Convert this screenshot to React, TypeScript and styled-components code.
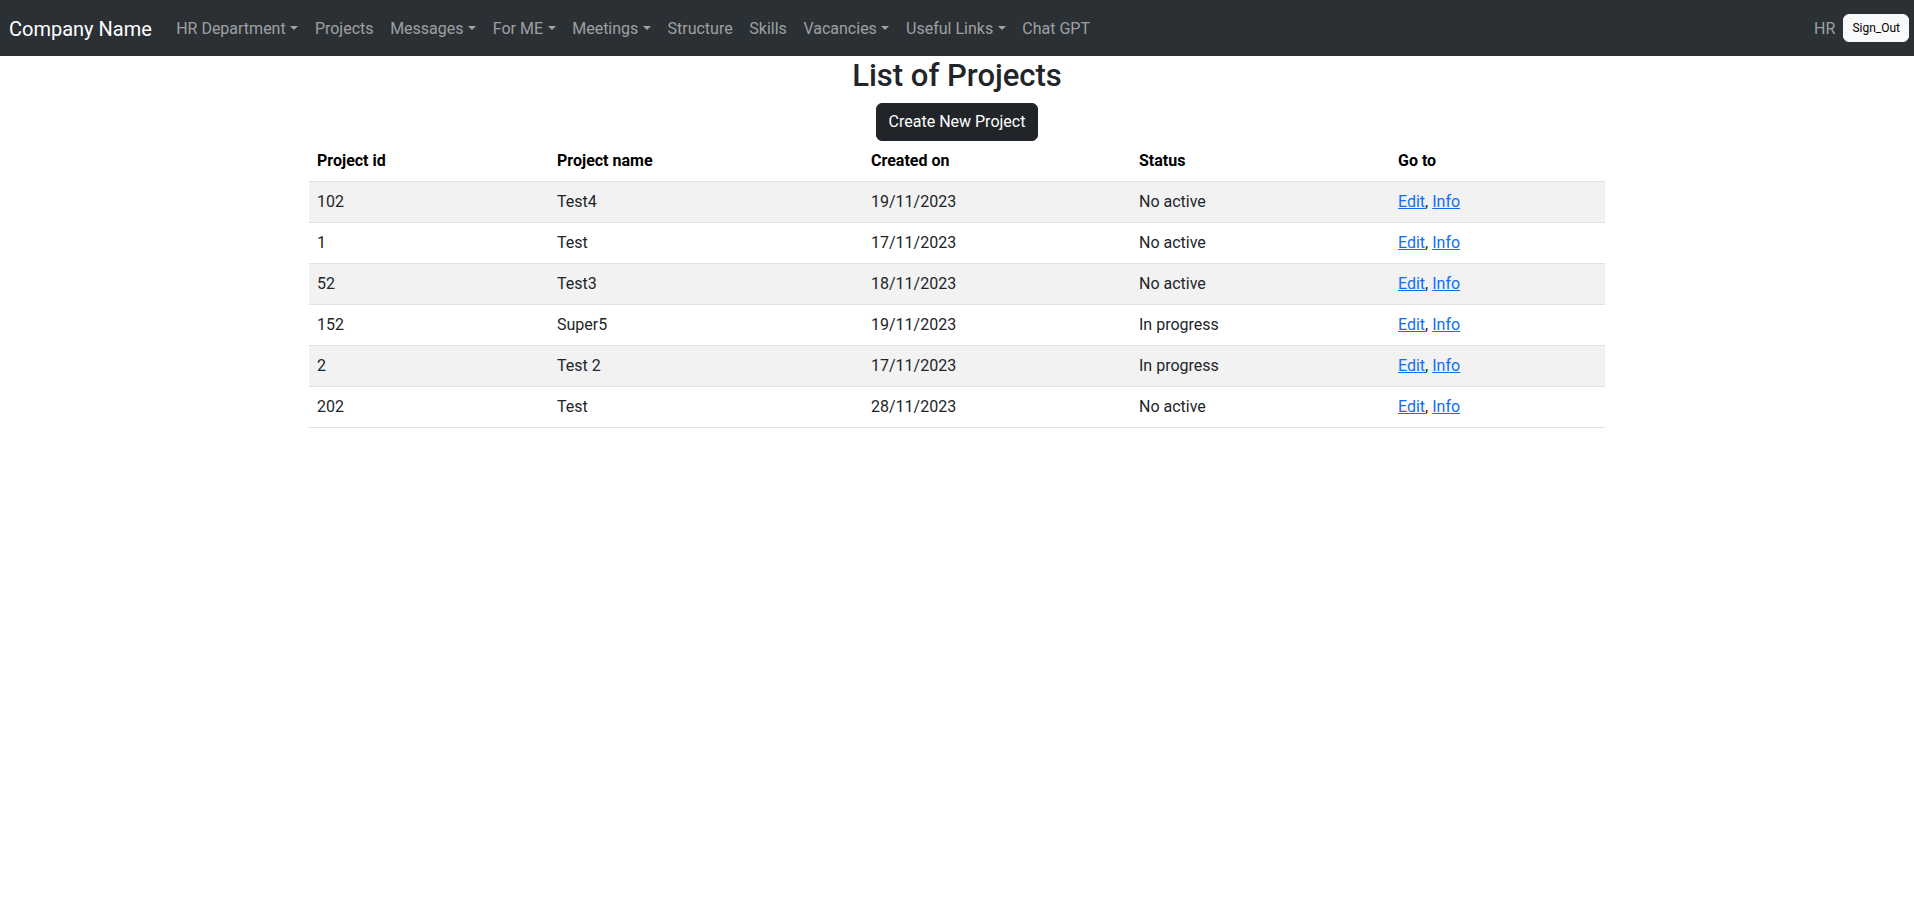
import React from "react";
import styled, { createGlobalStyle } from "styled-components";

const GlobalStyle = createGlobalStyle`
  *, *::before, *::after { box-sizing: border-box; }
  body {
    margin: 0;
    font-family: Roboto, "Liberation Sans", Arial, sans-serif;
    font-size: 16px;
    line-height: 1.5;
    color: #212529;
    background: #fff;
  }
`;

const Navbar = styled.nav`
  display: flex;
  align-items: center;
  justify-content: space-between;
  height: 56px;
  padding: 8px 5px 8px 9px;
  background: #2b3035;
`;

const NavLeft = styled.div`
  display: flex;
  align-items: center;
`;

const Brand = styled.a`
  font-size: 20px;
  line-height: 30px;
  padding: 6px 0 4px;
  margin-right: 16px;
  color: #fff;
  text-decoration: none;
  white-space: nowrap;
`;

const NavList = styled.ul`
  display: flex;
  list-style: none;
  margin: 0;
  padding: 0;
`;

const NavLink = styled.a<{ $dropdown?: boolean }>`
  display: block;
  padding: 9px 8.3px 7px;
  color: rgba(255, 255, 255, 0.55);
  text-decoration: none;
  white-space: nowrap;
  &::after {
    content: ${(p) => (p.$dropdown ? '""' : "none")};
    display: inline-block;
    margin-left: 4.6px;
    vertical-align: 0.255em;
    border-top: 0.3em solid;
    border-right: 0.3em solid transparent;
    border-left: 0.3em solid transparent;
    border-bottom: 0;
  }
`;

const NavRight = styled.div`
  display: flex;
  align-items: center;
`;

const UserLabel = styled.span`
  padding: 9px 8px 7px 0;
  color: rgba(255, 255, 255, 0.55);
`;

const SignOutButton = styled.button`
  font-family: inherit;
  font-size: 12px;
  line-height: 18px;
  padding: 4px 8px;
  border: 1px solid #f8f9fa;
  border-radius: 6px;
  background: #f8f9fa;
  color: #000;
  cursor: pointer;
`;

const Container = styled.main`
  max-width: 1320px;
  margin: 0 auto;
  padding: 1px 12px 0;
`;

const Title = styled.h2`
  margin: 0 0 8px;
  font-size: 31px;
  font-weight: 500;
  line-height: 38px;
  text-align: center;
  color: #212529;
`;

const Actions = styled.div`
  display: flex;
  justify-content: center;
`;

const DarkButton = styled.button`
  font-family: inherit;
  font-size: 16px;
  line-height: 24px;
  padding: 6px 12px;
  border: 1px solid #212529;
  border-radius: 6px;
  background: #212529;
  color: #fff;
  cursor: pointer;
`;

const Table = styled.table`
  width: 100%;
  border-collapse: collapse;
  color: #212529;
`;

const HeadCell = styled.th`
  padding: 8px;
  text-align: left;
  font-weight: 700;
  color: #000;
  border-bottom: 1px solid #dee2e6;
`;

const Row = styled.tr<{ $striped: boolean }>`
  background: ${(p) => (p.$striped ? "#f2f2f2" : "#fff")};
`;

const Cell = styled.td`
  padding: 8px;
  border-bottom: 1px solid #dee2e6;
`;

const Link = styled.a`
  color: #0d6efd;
  text-decoration: underline;
`;

const navItems: { label: string; dropdown?: boolean }[] = [
  { label: "HR Department", dropdown: true },
  { label: "Projects" },
  { label: "Messages", dropdown: true },
  { label: "For ME", dropdown: true },
  { label: "Meetings", dropdown: true },
  { label: "Structure" },
  { label: "Skills" },
  { label: "Vacancies", dropdown: true },
  { label: "Useful Links", dropdown: true },
  { label: "Chat GPT" },
];

const projects = [
  { id: 102, name: "Test4", created: "19/11/2023", status: "No active" },
  { id: 1, name: "Test", created: "17/11/2023", status: "No active" },
  { id: 52, name: "Test3", created: "18/11/2023", status: "No active" },
  { id: 152, name: "Super5", created: "19/11/2023", status: "In progress" },
  { id: 2, name: "Test 2", created: "17/11/2023", status: "In progress" },
  { id: 202, name: "Test", created: "28/11/2023", status: "No active" },
];

const colWidths = [240, 314, 268, 259, 215];

export default function App() {
  return (
    <>
      <GlobalStyle />
      <Navbar>
        <NavLeft>
          <Brand href="#">Company Name</Brand>
          <NavList>
            {navItems.map((item) => (
              <li key={item.label}>
                <NavLink href="#" $dropdown={item.dropdown}>
                  {item.label}
                </NavLink>
              </li>
            ))}
          </NavList>
        </NavLeft>
        <NavRight>
          <UserLabel>HR</UserLabel>
          <SignOutButton>Sign_Out</SignOutButton>
        </NavRight>
      </Navbar>
      <Container>
        <Title>List of Projects</Title>
        <Actions>
          <DarkButton>Create New Project</DarkButton>
        </Actions>
        <Table>
          <colgroup>
            {colWidths.map((w, i) => (
              <col key={i} style={{ width: w }} />
            ))}
          </colgroup>
          <thead>
            <tr>
              <HeadCell>Project id</HeadCell>
              <HeadCell>Project name</HeadCell>
              <HeadCell>Created on</HeadCell>
              <HeadCell>Status</HeadCell>
              <HeadCell>Go to</HeadCell>
            </tr>
          </thead>
          <tbody>
            {projects.map((p, i) => (
              <Row key={i} $striped={i % 2 === 0}>
                <Cell>{p.id}</Cell>
                <Cell>{p.name}</Cell>
                <Cell>{p.created}</Cell>
                <Cell>{p.status}</Cell>
                <Cell>
                  <Link href="#">Edit</Link>, <Link href="#">Info</Link>
                </Cell>
              </Row>
            ))}
          </tbody>
        </Table>
      </Container>
    </>
  );
}
